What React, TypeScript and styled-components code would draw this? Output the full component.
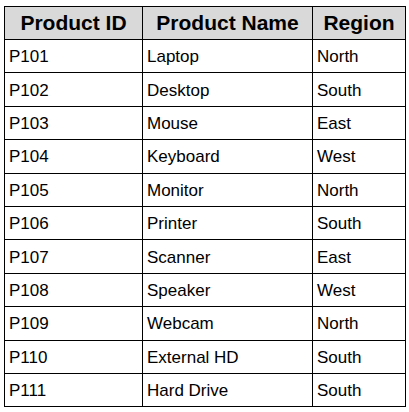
import styled, { createGlobalStyle } from "styled-components";

const GlobalStyle = createGlobalStyle`
  html, body {
    margin: 0;
    padding: 0;
    background: #ffffff;
  }
`;

const Page = styled.div`
  padding: 6px 0 0 4px;
  font-family: "Liberation Sans", Arial, sans-serif;
`;

const Table = styled.table`
  border-collapse: collapse;
  width: 401px;
  table-layout: fixed;
`;

const HeadCell = styled.th<{ $w: number }>`
  width: ${(p) => p.$w}px;
  height: 33px;
  padding: 0 4px;
  border: 1px solid #000;
  background: #d9d9d9;
  color: #000;
  font-size: 21px;
  font-weight: bold;
  text-align: center;
  box-sizing: border-box;
`;

const Cell = styled.td`
  height: 33.4px;
  padding: 2px 4px 0 4px;
  border: 1px solid #000;
  color: #000;
  font-size: 17px;
  text-align: left;
  box-sizing: border-box;
  white-space: nowrap;
`;

const rows = [
  ["P101", "Laptop", "North"],
  ["P102", "Desktop", "South"],
  ["P103", "Mouse", "East"],
  ["P104", "Keyboard", "West"],
  ["P105", "Monitor", "North"],
  ["P106", "Printer", "South"],
  ["P107", "Scanner", "East"],
  ["P108", "Speaker", "West"],
  ["P109", "Webcam", "North"],
  ["P110", "External HD", "South"],
  ["P111", "Hard Drive", "South"],
];

export default function App() {
  return (
    <Page>
      <GlobalStyle />
      <Table>
        <thead>
          <tr>
            <HeadCell $w={138}>Product ID</HeadCell>
            <HeadCell $w={170}>Product Name</HeadCell>
            <HeadCell $w={93}>Region</HeadCell>
          </tr>
        </thead>
        <tbody>
          {rows.map((r) => (
            <tr key={r[0]}>
              <Cell>{r[0]}</Cell>
              <Cell>{r[1]}</Cell>
              <Cell>{r[2]}</Cell>
            </tr>
          ))}
        </tbody>
      </Table>
    </Page>
  );
}
